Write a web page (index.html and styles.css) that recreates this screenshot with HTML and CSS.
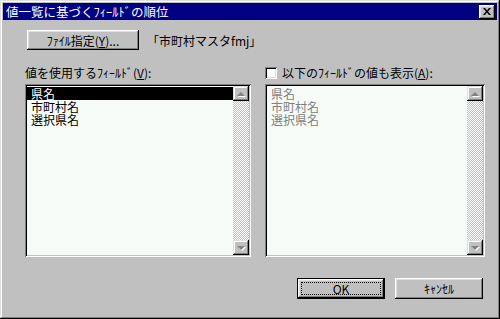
FILE: index.html
```html
<!DOCTYPE html>
<html lang="ja">
<head>
    <meta charset="UTF-8">
    <title>値一覧に基づくﾌｨｰﾙﾄﾞの順位</title>
    <link rel="stylesheet" href="styles.css">
</head>
<body>
    <div class="window">
        <div class="titlebar">
            <span class="title">値一覧に基づくﾌｨｰﾙﾄﾞの順位</span>
            <button class="close-btn">
                <svg width="8" height="7" viewBox="0 0 8 7">
                    <path d="M0 0h2l2 2.5L6 0h2L5 3.5 8 7H6L4 4.5 2 7H0l3-3.5z" fill="#000"/>
                </svg>
            </button>
        </div>

        <div class="dialog">
            <div class="file-row">
                <button class="btn file-btn">ﾌｧｲﾙ指定(<u>Y</u>)...</button>
                <span class="file-name">「市町村マスタfmj」</span>
            </div>

            <div class="columns">
                <div class="column">
                    <div class="label">値を使用するﾌｨｰﾙﾄﾞ(<u>V</u>):</div>
                    <div class="listbox">
                        <div class="items">
                            <div class="item selected">県名</div>
                            <div class="item">市町村名</div>
                            <div class="item">選択県名</div>
                        </div>
                        <div class="scrollbar">
                            <div class="scroll-btn"><span class="arrow up"></span></div>
                            <div class="track"></div>
                            <div class="scroll-btn"><span class="arrow down"></span></div>
                        </div>
                    </div>
                </div>

                <div class="column">
                    <label class="label check-row">
                        <span class="checkbox"></span>
                        <span>以下のﾌｨｰﾙﾄﾞの値も表示(<u>A</u>):</span>
                    </label>
                    <div class="listbox">
                        <div class="items disabled">
                            <div class="item">県名</div>
                            <div class="item">市町村名</div>
                            <div class="item">選択県名</div>
                        </div>
                        <div class="scrollbar">
                            <div class="scroll-btn"><span class="arrow up"></span></div>
                            <div class="track"></div>
                            <div class="scroll-btn"><span class="arrow down"></span></div>
                        </div>
                    </div>
                </div>
            </div>

            <div class="buttons">
                <button class="btn default-btn"><span class="focus">OK</span></button>
                <button class="btn">ｷｬﾝｾﾙ</button>
            </div>
        </div>
    </div>
</body>
</html>
```

FILE: styles.css
```css
body {
    margin: 0;
    background: #c0c0c0;
    font-family: "Noto Sans CJK JP", "Liberation Sans", sans-serif;
    font-size: 12px;
    color: #000;
}
u {
    text-decoration: underline;
    text-underline-offset: 1px;
}
.window {
    width: 500px;
    height: 319px;
    box-sizing: border-box;
    padding: 3px;
    background: #c0c0c0;
    box-shadow: inset -1px -1px #000, inset 1px 1px #dfdfdf,
                inset -2px -2px #808080, inset 2px 2px #fff;
    display: flex;
    flex-direction: column;
}
.titlebar {
    height: 17px;
    background: #000080;
    color: #fff;
    display: flex;
    align-items: center;
    justify-content: space-between;
    padding: 0 2px 0 3px;
}
.title {
    font-size: 12.5px;
    line-height: 17px;
}
.close-btn {
    width: 16px;
    height: 14px;
    padding: 0;
    border: none;
    background: #c0c0c0;
    box-shadow: inset -1px -1px #000, inset 1px 1px #fff,
                inset -2px -2px #808080, inset 2px 2px #dfdfdf;
    display: flex;
    align-items: center;
    justify-content: center;
}
.dialog {
    flex: 1;
    padding: 10px 14px 0 22px;
    display: flex;
    flex-direction: column;
}
.btn {
    font: inherit;
    height: 21px;
    padding: 0;
    border: none;
    background: #c0c0c0;
    color: #000;
    box-shadow: inset -1px -1px #000, inset 1px 1px #fff,
                inset -2px -2px #808080, inset 2px 2px #dfdfdf;
}
.file-row {
    display: flex;
    align-items: center;
    gap: 8px;
    padding-left: 2px;
}
.file-btn {
    width: 112px;
    height: 20px;
}
.columns {
    display: grid;
    grid-template-columns: 226px 220px;
    column-gap: 14px;
    margin-top: 16px;
}
.column {
    display: flex;
    flex-direction: column;
}
.label {
    height: 14px;
    line-height: 14px;
    margin-bottom: 4px;
}
.check-row {
    display: flex;
    align-items: center;
    gap: 5px;
}
.checkbox {
    width: 12px;
    height: 12px;
    background: #fff;
    box-shadow: inset 1px 1px #808080, inset -1px -1px #fff,
                inset 2px 2px #000, inset -2px -2px #dfdfdf;
}
.listbox {
    height: 173px;
    box-sizing: border-box;
    padding: 2px;
    background: #f7fbf7;
    box-shadow: inset 1px 1px #808080, inset -1px -1px #fff,
                inset 2px 2px #000, inset -2px -2px #c0c0c0;
    display: flex;
}
.items {
    flex: 1;
    padding-top: 1px;
}
.item {
    height: 13px;
    line-height: 13px;
    padding-left: 4px;
}
.item.selected {
    background: #000;
    color: #fff;
}
.items.disabled .item {
    color: #808080;
}
.scrollbar {
    width: 16px;
    display: flex;
    flex-direction: column;
}
.scroll-btn {
    height: 15px;
    background: #c0c0c0;
    box-shadow: inset -1px -1px #000, inset 1px 1px #dfdfdf,
                inset -2px -2px #808080, inset 2px 2px #fff;
    display: flex;
    align-items: center;
    justify-content: center;
}
.track {
    flex: 1;
    background: repeating-conic-gradient(#c0c0c0 0 25%, #fff 0 50%) 0 0 / 2px 2px;
}
.arrow {
    width: 0;
    height: 0;
    border-left: 4px solid transparent;
    border-right: 4px solid transparent;
    filter: drop-shadow(1px 1px 0 #fff);
}
.arrow.up {
    border-bottom: 4px solid #808080;
}
.arrow.down {
    border-top: 4px solid #808080;
}
.buttons {
    display: flex;
    justify-content: flex-end;
    gap: 10px;
    margin-top: 21px;
}
.buttons .btn {
    width: 88px;
}
.default-btn {
    box-shadow: inset 0 0 0 1px #000, inset -2px -2px #000, inset 2px 2px #fff,
                inset -3px -3px #808080, inset 3px 3px #dfdfdf;
    display: flex;
    padding: 4px;
}
.focus {
    flex: 1;
    border: 1px dotted #000;
    display: flex;
    align-items: center;
    justify-content: center;
}
```
